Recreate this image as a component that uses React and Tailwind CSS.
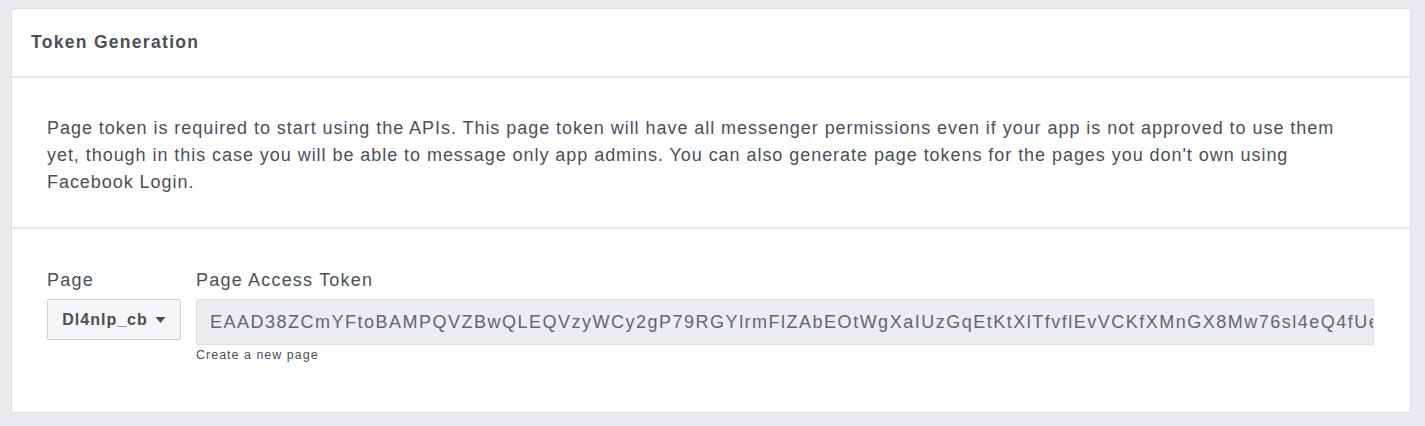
export default function App() {
  const token =
    "EAAD38ZCmYFtoBAMPQVZBwQLEQVzyWCy2gP79RGYlrmFlZAbEOtWgXaIUzGqEtKtXlTfvflEvVCKfXMnGX8Mw76sl4eQ4fUe";
  return (
    <div
      className="w-[1425px] h-[426px] bg-[#e9ebee] pt-[8px] pl-[11px]"
      style={{ fontFamily: '"Liberation Sans", Arial, sans-serif' }}
    >
      <div className="w-[1400px] h-[405px] bg-white border border-[#dddfe2] rounded-[3px] flex flex-col">
        <div className="h-[69px] border-b-2 border-[#e5e6e9] flex items-center pl-[19px]">
          <h2 className="text-[17.5px] font-bold tracking-[1.3px] text-[#4b4f56]">Token Generation</h2>
        </div>

        <div className="border-b-2 border-[#e5e6e9] pt-[37px] pb-[31px] pl-[35px] pr-[40px]">
          <p className="text-[18px] tracking-[0.95px] leading-[27px] text-[#4b4f56]">
            Page token is required to start using the APIs. This page token will have all messenger permissions even if your app is not approved to use them yet, though in this case you will be able to message only app admins. You can also generate page tokens for the pages you don't own using Facebook Login.
          </p>
        </div>

        <div className="flex gap-[15px] pl-[35px] pt-[39px]">
          <div className="flex flex-col">
            <label className="text-[18px] tracking-[1.2px] leading-[24px] text-[#4b4f56] mb-[7px]">Page</label>
            <button className="h-[41px] w-[134px] bg-[#f5f6f7] border border-[#ced0d4] rounded-[2px] flex items-center justify-center gap-[7px] text-[16px] tracking-[1px] font-bold text-[#4b4f56]">
              Dl4nlp_cb
              <svg width="11" height="6" viewBox="0 0 10 6">
                <path d="M0 0h10L5 6z" fill="#4b4f56" />
              </svg>
            </button>
          </div>
          <div className="flex flex-col">
            <label className="text-[18px] tracking-[1.2px] leading-[24px] text-[#4b4f56] mb-[7px]">Page Access Token</label>
            <div className="h-[46px] w-[1178px] bg-[#ebedf0] border border-[#dddfe2] rounded-[2px] flex items-center pl-[13px] overflow-hidden whitespace-nowrap">
              <span className="text-[18px] tracking-[1.5px] text-[#606770]">{token}</span>
            </div>
            <a className="text-[12.5px] tracking-[1px] leading-[18px] text-[#4b4f56] mt-[1px]">Create a new page</a>
          </div>
        </div>
      </div>
    </div>
  );
}
